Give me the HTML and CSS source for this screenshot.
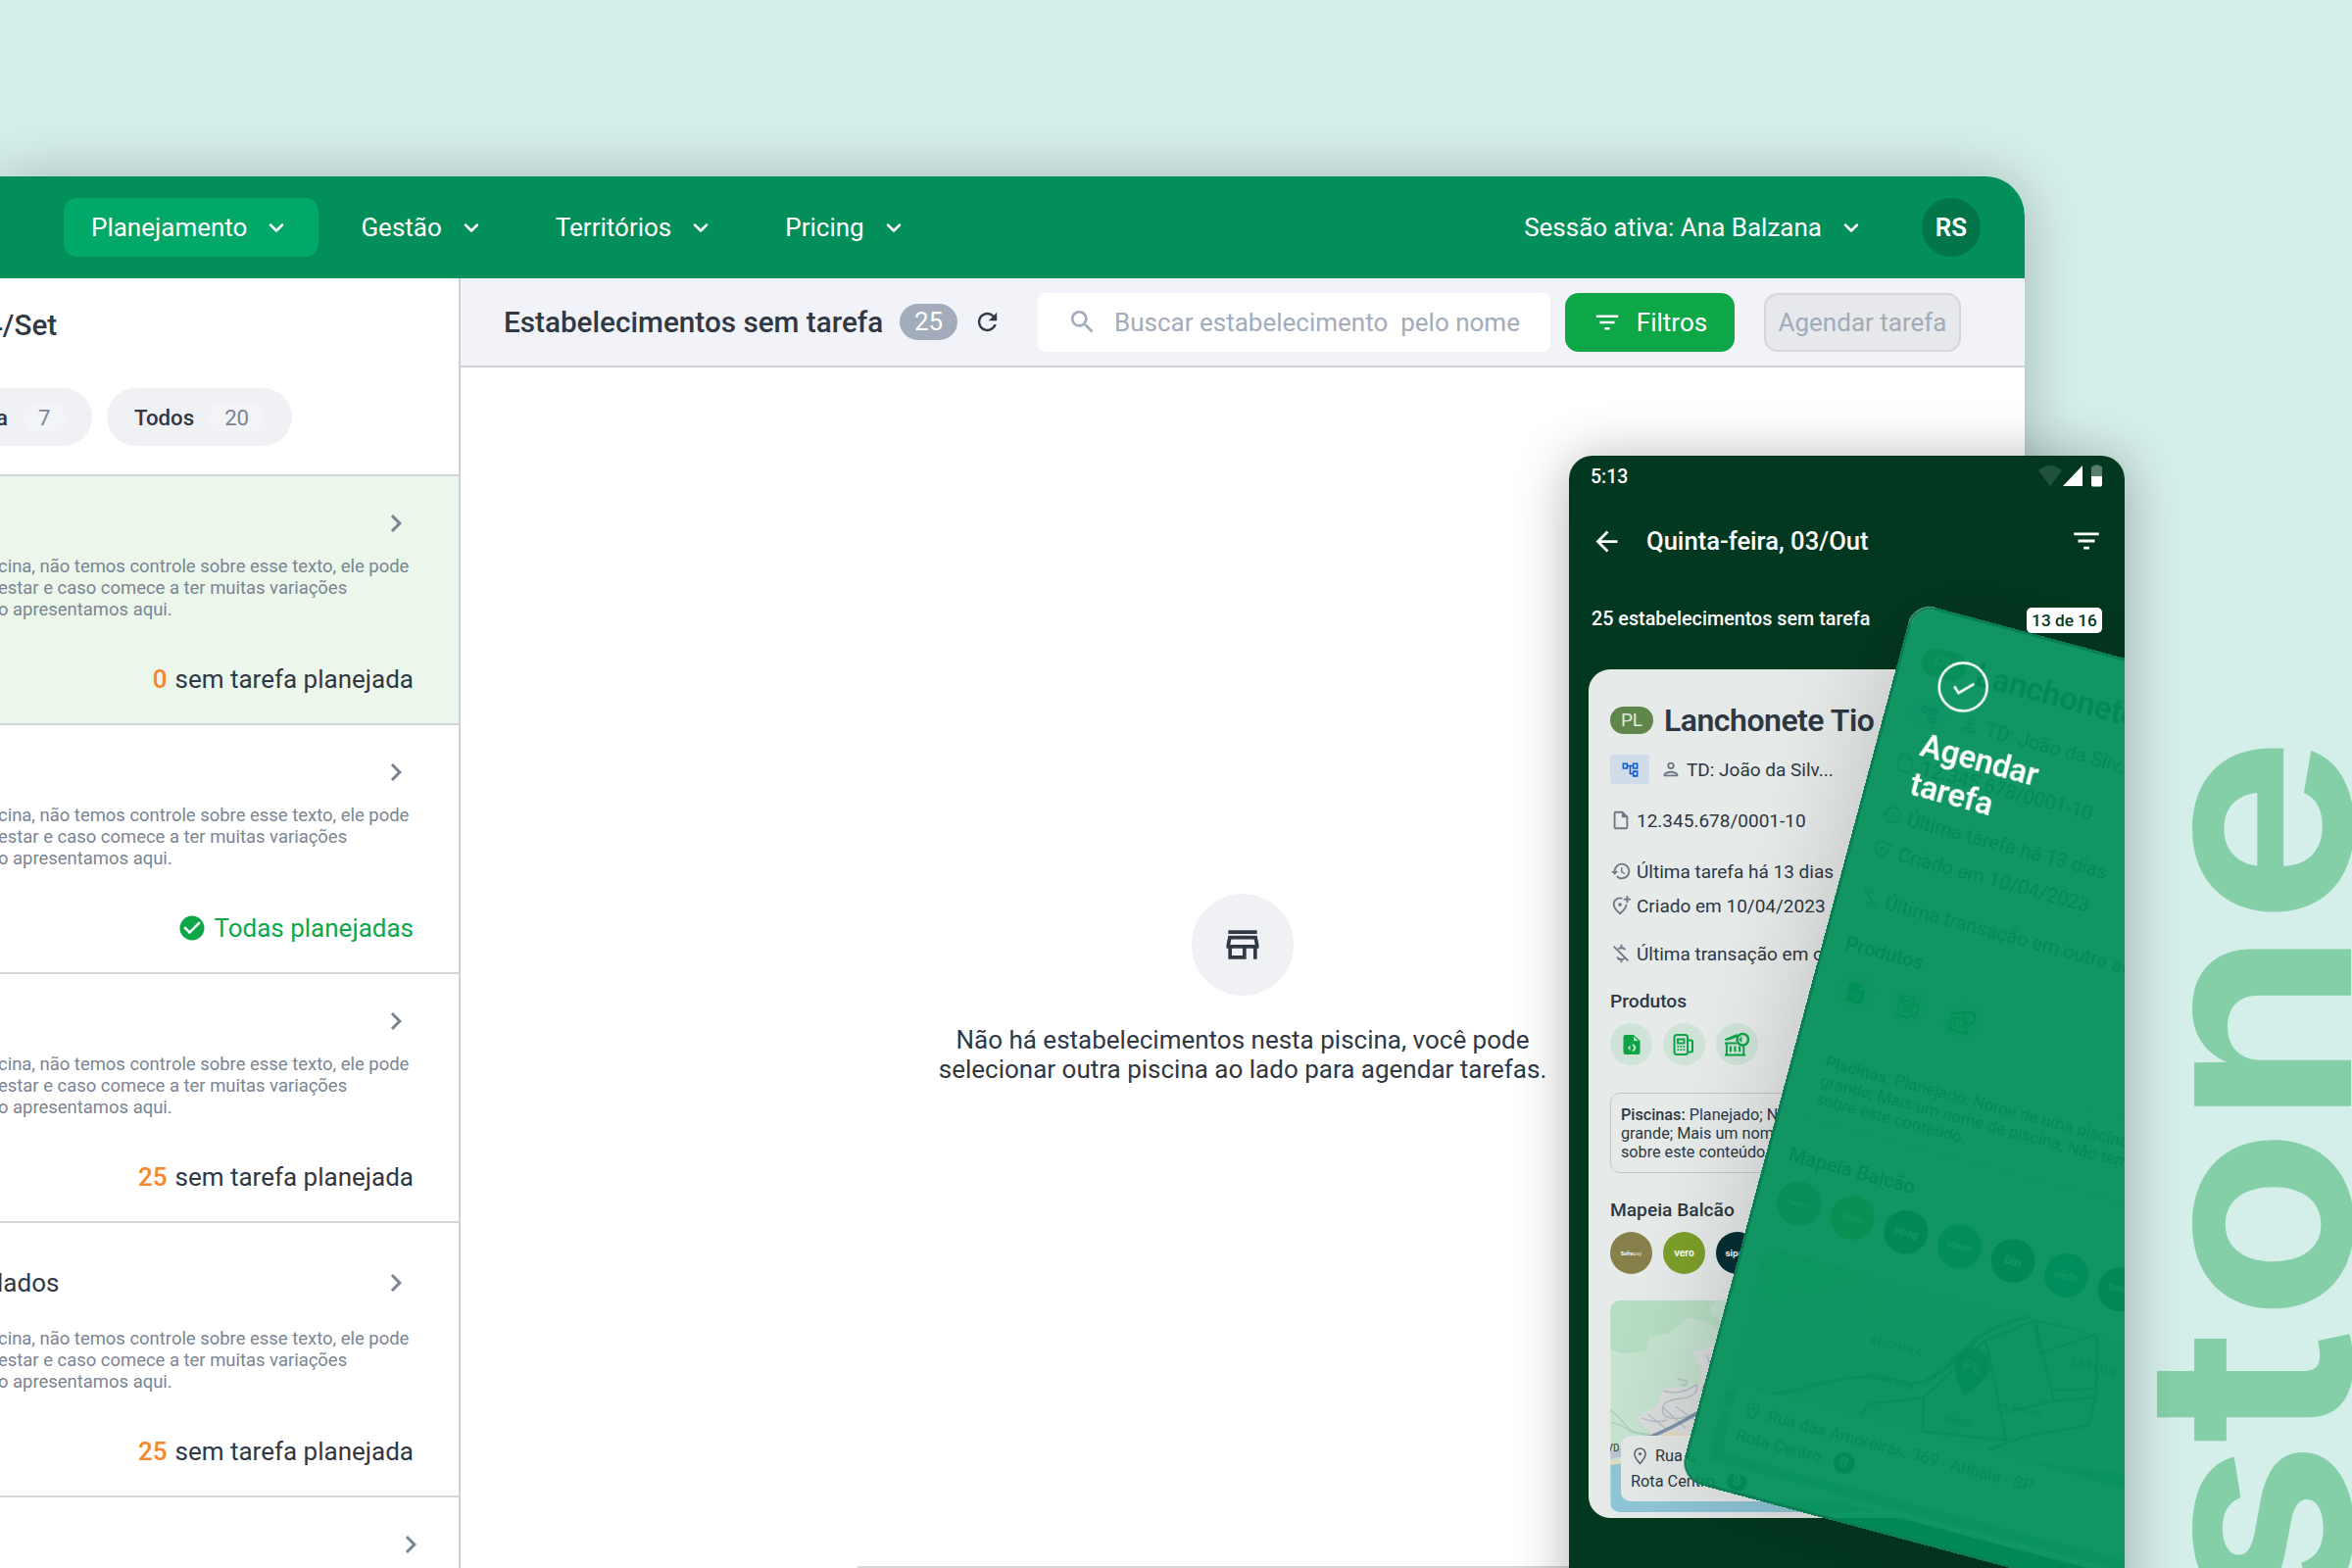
FILE: index.html
```html
<!DOCTYPE html>
<html lang="pt-BR">
<head>
<meta charset="utf-8">
<title>Planejamento</title>
<link rel="stylesheet" href="styles.css">
</head>
<body>
<svg class="defs" aria-hidden="true">
  <symbol id="i-down" viewBox="0 0 24 24"><path d="M7.200 10l4.800 4.800 4.800-4.800" fill="none" stroke="currentColor" stroke-width="2" stroke-linecap="round" stroke-linejoin="round"/></symbol>
  <symbol id="i-right" viewBox="0 0 24 24"><path fill="currentColor" d="M8.59 16.59 13.17 12 8.59 7.41 10 6l6 6-6 6z"/></symbol>
  <symbol id="i-refresh" viewBox="0 0 24 24"><path fill="currentColor" d="M17.65 6.35A7.96 7.96 0 0 0 12 4a8 8 0 1 0 7.73 10h-2.08A6 6 0 1 1 12 6c1.66 0 3.14.69 4.22 1.78L13 11h7V4z"/></symbol>
  <symbol id="i-search" viewBox="0 0 24 24"><path fill="currentColor" d="M15.5 14h-.79l-.28-.27A6.47 6.47 0 0 0 16 9.5 6.5 6.5 0 1 0 9.5 16c1.61 0 3.09-.59 4.23-1.57l.27.28v.79l5 4.99L20.49 19zm-6 0a4.5 4.5 0 1 1 0-9 4.5 4.5 0 0 1 0 9z"/></symbol>
  <symbol id="i-filter" viewBox="0 0 24 24"><path fill="currentColor" d="M10 18h4v-2h-4zM3 6v2h18V6zm3 7h12v-2H6z"/></symbol>
  <symbol id="i-check" viewBox="0 0 24 24"><path fill="currentColor" d="M12 2a10 10 0 1 0 0 20 10 10 0 0 0 0-20zm-2 15-5-5 1.41-1.41L10 14.17l7.59-7.59L19 8z"/></symbol>
  <symbol id="i-store" viewBox="0 0 24 24"><path fill="currentColor" d="M18.36 9l.6 3H5.04l.6-3zM20 4H4v2h16zm0 3H4l-1 5v2h1v6h10v-6h4v6h2v-6h1v-2zM6 18v-4h6v4z"/></symbol>
  <symbol id="i-back" viewBox="0 0 24 24"><path fill="currentColor" d="M20 11H7.83l5.59-5.59L12 4l-8 8 8 8 1.41-1.41L7.83 13H20z"/></symbol>
  <symbol id="i-tree" viewBox="0 0 24 24"><path fill="currentColor" d="M22 11V3h-7v3H9V3H2v8h7V8h2v10h4v3h7v-8h-7v3h-2V8h2v3zM7 9H4V5h3zm10 6h3v4h-3zm0-10h3v4h-3z"/></symbol>
  <symbol id="i-person" viewBox="0 0 24 24"><path fill="currentColor" d="M12 6a2 2 0 1 1 0 4 2 2 0 0 1 0-4m0 10c2.7 0 5.8 1.29 6 2H6c.23-.72 3.31-2 6-2m0-12a4 4 0 1 0 0 8 4 4 0 0 0 0-8zm0 10c-2.670 0-8 1.340-8 4v2h16v-2c0-2.660-5.330-4-8-4z"/></symbol>
  <symbol id="i-doc" viewBox="0 0 24 24"><path fill="currentColor" d="M14 2H6a2 2 0 0 0-2 2v16c0 1.100.890 2 1.990 2H18a2 2 0 0 0 2-2V8zM6 20V4h7v5h5v11z"/></symbol>
  <symbol id="i-history" viewBox="0 0 24 24"><path fill="currentColor" d="M13 3a9 9 0 0 0-9 9H1l3.890 3.890.070.140L9 12H6a7 7 0 1 1 2.060 4.940l-1.420 1.420A9 9 0 1 0 13 3zm-1 5v5l4.280 2.540.72-1.210-3.500-2.080V8z"/></symbol>
  <symbol id="i-addpin" viewBox="0 0 24 24"><path fill="none" stroke="currentColor" stroke-width="2" d="M13.500 4.200A7 7 0 0 0 4 10.700c0 3 2.500 6.600 7 10.300 4.500-3.700 7-7.300 7-10.300"/><circle cx="11" cy="11" r="2" fill="currentColor"/><path fill="currentColor" d="M18 1h2v3h3v2h-3v3h-2V6h-3V4h3z"/></symbol>
  <symbol id="i-nomoney" viewBox="0 0 24 24"><path fill="none" stroke="currentColor" stroke-width="2" d="M4 4l16 16M12.500 2v3.500M12.500 18.500V22M16.500 8c-.4-1.500-2-2.300-4-2.300-1.600 0-2.800.5-3.400 1.300M8 15.800c.3 1.800 2.200 2.700 4.400 2.700 1.700 0 3-.5 3.700-1.300"/></symbol>
  <symbol id="i-pin" viewBox="0 0 24 24"><path fill="none" stroke="currentColor" stroke-width="2" d="M12 2.500a7 7 0 0 0-7 7c0 5 7 12.500 7 12.500s7-7.500 7-12.500a7 7 0 0 0-7-7z"/><circle cx="12" cy="9.500" r="2" fill="currentColor"/></symbol>
  <symbol id="i-file" viewBox="0 0 24 24"><path fill="currentColor" d="M3.500 4a2 2 0 0 1 2-2H14l6.500 6v12a2 2 0 0 1-2 2h-13a2 2 0 0 1-2-2z"/><path class="hole" d="M14 3.600V8h4.600zM10.500 12.500v5.500L8 15.200zM12.700 11.200c2 .3 3.500 1.900 3.500 3.900s-1.500 3.700-3.500 4v-2c1-.2 1.500-1 1.500-2s-.5-1.700-1.500-2z"/></symbol>
  <symbol id="i-pos" viewBox="0 0 24 24"><path fill="none" stroke="currentColor" stroke-width="2" d="M4 2h8.500a2.500 2.500 0 0 1 2.500 2.500v15a2.500 2.500 0 0 1-2.500 2.500H4a2.500 2.500 0 0 1-2.500-2.500v-15A2.500 2.500 0 0 1 4 2zM5 6.500h6.500v4H5zM15 7.500h3.500a1.500 1.500 0 0 1 1.500 1.500v9a1.500 1.500 0 0 1-1.500 1.500H15"/><path fill="currentColor" d="M4.500 13h1.800v1.800H4.500zm3 0h1.800v1.800H7.500zm3 0h1.800v1.800h-1.800zm-6 3.200h1.800V18H4.500zm3 0h1.800V18H7.500zm3 0h1.800V18h-1.800z"/></symbol>
  <symbol id="i-bank" viewBox="0 0 28 26"><path fill="none" stroke="currentColor" stroke-width="2" d="M1 24.500h22M3 24V12M21 24V14M1 12h13M2 8.500L14 3.500"/><path fill="currentColor" d="M1 7.500L14 2v3.500L6 8.500H1zM6 15h2.200v6H6zm4.800 0H13v6h-2.200zm4.800 0h2.200v6h-2.200z"/><circle cx="20" cy="8" r="6" fill="none" stroke="currentColor" stroke-width="2.600"/><path fill="currentColor" d="M19 4.500v7L15.800 8z"/></symbol>
  <symbol id="map" viewBox="0 0 484 216">
    <rect width="484" height="216" fill="#c6e4d0"/>
    <path fill="#b7dec4" d="M0 0h108q-10 8-5 14l10 8h12V50l-14 6-8-30-12-6q-12-6-20 4l-8 10-23 2-4 16L12 54 0 50z"/>
    <path fill="#c6e4d0" d="M60 32l15-8 17-4 14 6 20 24-30 10-40 0z"/>
    <path fill="#dcdfde" d="M84 52l10-2 14-6 30-4 60 30 40-10 60-60h186v216H40v-82l-12-12q2-8 18-12l8-20 16-2q22 4 22-8v-10z"/>
    <path fill="#c6e4d0" d="M130 0h150l-50 30-40 50-40-10-14-24z"/>
    <g fill="none" stroke="#b9c0ca" stroke-width="1.500">
      <path d="M54 92q14 6 34-6 2 12-16 14t-18 8q-4 10 8 12t26-6M68 80l10 2q0 6-6 4M38 116l20 16M52 108l24 22M66 108l20 14M32 120q14 6 26 2M92 92l12-20M98 56l4 10 6-8"/>
    </g>
    <path fill="none" stroke="#a4cfb4" stroke-width="1.200" d="M0 112q10 8 16 16t24 8M0 124q14 4 20 10l20 4"/>
    <path fill="#e5dcbd" d="M0 164l30-6 30-26 18 6-30 28-48 6z"/>
    <path fill="#b9c3d2" d="M0 154l20-6 20-8v12L0 162z"/>
    <path fill="none" stroke="#8192ad" stroke-width="3.500" d="M22 145Q50 138 88 115T172 93Q196 84 211 52T269-1"/>
    <path fill="#8fc6d7" d="M0 168l60-10 80 8 110-24 234-30v104H0z"/>
    <g fill="#8fb8a0" fill-opacity=".35" stroke="#4b6a5c" stroke-width="1.800">
      <path d="M133 137l3-14 51-20 44-70 42-31 38 71-47 25 12 24-81 13-8-32M187 103l8 32M231 33l33 65M273 2l62-3 13 52-39 12M349 51l1 36-56 26-33 23M311 73l38-14M273 2l12 30 50-33"/>
    </g>
    <path fill="#2f6b4d" d="M225 92c-9-13-17-21-17-31a17 17 0 0 1 34 0c0 10-8 18-17 31z"/>
    <g class="map-text">
      <text x="-4" y="154">VD</text>
      <text x="122" y="65" letter-spacing="1.500">ROCINHA</text>
      <text x="318" y="34" letter-spacing="1.500">LEBLON</text>
      <text x="128" y="98" font-size="8">ROUPA SUJA</text>
      <text x="210" y="120" font-size="8">VIDIGAL</text>
      <text x="262" y="92" font-size="7">Av. Niemeyer</text>
      <text transform="translate(188 88) rotate(-54)" font-size="8">Túnel Zuzu Angel</text>
    </g>
    <text x="225" y="67" class="map-pin">PL</text>
  </symbol>
</svg>

<main class="stage">
  <svg class="wordmark" viewBox="0 0 240 900">
    <text transform="translate(239 900) rotate(-90) scale(1.100 1)" x="-46 115 229 410 597" y="0">stone</text>
  </svg>

  <section class="window">
    <header class="topbar">
      <nav class="nav">
        <a class="nav-item active">Planejamento<svg><use href="#i-down"/></svg></a>
        <a class="nav-item">Gestão<svg><use href="#i-down"/></svg></a>
        <a class="nav-item">Territórios<svg><use href="#i-down"/></svg></a>
        <a class="nav-item">Pricing<svg><use href="#i-down"/></svg></a>
      </nav>
      <div class="session">
        <a class="nav-item">Sessão ativa: Ana Balzana<svg><use href="#i-down"/></svg></a>
        <span class="avatar">RS</span>
      </div>
    </header>
    <div class="body">
      <aside class="side">
        <div class="side-head">
          <h2>4/Set</h2>
          <div class="chips">
            <span class="chip first">a<b>7</b></span>
            <span class="chip">Todos<b>20</b></span>
          </div>
        </div>
        <article class="pool selected">
          <div class="pool-top"><svg><use href="#i-right"/></svg></div>
          <p><span class="l1">cina, não temos controle sobre esse texto, ele pode</span><span class="l2">estar e caso comece a ter muitas variações</span><span class="l3">o apresentamos aqui.</span></p>
          <div class="pool-foot"><b>0</b>sem tarefa planejada</div>
        </article>
        <article class="pool">
          <div class="pool-top"><svg><use href="#i-right"/></svg></div>
          <p><span class="l1">cina, não temos controle sobre esse texto, ele pode</span><span class="l2">estar e caso comece a ter muitas variações</span><span class="l3">o apresentamos aqui.</span></p>
          <div class="pool-foot done"><svg><use href="#i-check"/></svg>Todas planejadas</div>
        </article>
        <article class="pool">
          <div class="pool-top"><svg><use href="#i-right"/></svg></div>
          <p><span class="l1">cina, não temos controle sobre esse texto, ele pode</span><span class="l2">estar e caso comece a ter muitas variações</span><span class="l3">o apresentamos aqui.</span></p>
          <div class="pool-foot"><b>25</b>sem tarefa planejada</div>
        </article>
        <article class="pool tall">
          <div class="pool-top"><h3>lados</h3><svg><use href="#i-right"/></svg></div>
          <p><span class="l1">cina, não temos controle sobre esse texto, ele pode</span><span class="l2">estar e caso comece a ter muitas variações</span><span class="l3">o apresentamos aqui.</span></p>
          <div class="pool-foot"><b>25</b>sem tarefa planejada</div>
        </article>
        <article class="pool last">
          <div class="pool-top"><svg><use href="#i-right"/></svg></div>
        </article>
      </aside>
      <section class="content">
        <div class="toolbar">
          <h1>Estabelecimentos sem tarefa</h1>
          <span class="count">25</span>
          <svg class="refresh"><use href="#i-refresh"/></svg>
          <div class="search"><svg><use href="#i-search"/></svg><span>Buscar estabelecimento &nbsp;pelo nome</span></div>
          <button class="btn primary"><svg><use href="#i-filter"/></svg>Filtros</button>
          <button class="btn disabled">Agendar tarefa</button>
        </div>
        <div class="empty">
          <span class="empty-icon"><svg><use href="#i-store"/></svg></span>
          <p>Não há estabelecimentos nesta piscina, você pode<br>selecionar outra piscina ao lado para agendar tarefas.</p>
        </div>
        <div class="footline"></div>
      </section>
    </div>
  </section>

  <section class="phone-shadow"></section>
  <section class="phone">
    <div class="status">
      <span>5:13</span>
      <svg viewBox="0 0 68 24"><path fill="#fff" fill-opacity=".12" d="M1 6Q13-4 25 6L13 22z"/><path fill="#fff" d="M26 22L46 1v21z"/><path fill="#fff" fill-opacity=".35" d="M55 3q0-1.500 1.500-1.500H58V.5h5v1h1.500q1.500 0 1.500 1.500v9H55z"/><path fill="#fff" d="M55 12h11v8.500q0 2-1.500 2h-8q-1.500 0-1.500-2z"/></svg>
    </div>
    <div class="phone-bar"><svg class="back"><use href="#i-back"/></svg><h2>Quinta-feira, 03/Out</h2><svg class="filter"><use href="#i-filter"/></svg></div>
    <div class="phone-info"><span>25 estabelecimentos sem tarefa</span><span class="badge">13 de 16</span></div>

    <article class="card">
      <div class="row title"><span class="pl">PL</span><h3>Lanchonete Tio</h3></div>
      <div class="row tags"><span class="tree"><svg><use href="#i-tree"/></svg></span><svg class="person"><use href="#i-person"/></svg><span>TD: João da Silv...</span></div>
      <div class="row cnpj"><svg><use href="#i-doc"/></svg><span>12.345.678/0001-10</span></div>
      <div class="row task"><svg><use href="#i-history"/></svg><span>Última tarefa há 13 dias</span></div>
      <div class="row created"><svg><use href="#i-addpin"/></svg><span>Criado em 10/04/2023</span></div>
      <div class="row trans"><svg><use href="#i-nomoney"/></svg><span>Última transação em outra adq.</span></div>
      <h4>Produtos</h4>
      <div class="circles prods"><span><svg><use href="#i-file"/></svg></span><span><svg><use href="#i-pos"/></svg></span><span><svg class="bank"><use href="#i-bank"/></svg></span></div>
      <p class="pools"><b>Piscinas:</b> Planejado; Nome de uma piscina<br>grande; Mais um nome de piscina; Não temos<br>sobre este conteúdo.</p>
      <h4 class="second">Mapeia Balcão</h4>
      <div class="circles brands"><span class="safra">Safra<i>pay</i></span><span class="vero">vero</span><span class="sipag">sipag</span><span class="stone">stone</span><span class="bin">bin</span><span class="cielo">cielo</span><span class="outros">Outros</span></div>
      <div class="map"><svg><use href="#map"/></svg>
        <div class="address"><div><svg><use href="#i-pin"/></svg>Rua das Amoreiras, 369 - Atibaia - SP</div><div class="route">Rota Centro<b>8</b></div></div>
      </div>
    </article>

    <div class="swipe">
      <div class="ghost">
        <article class="card">
          <div class="row title"><span class="pl">PL</span><h3>Lanchonete Tio</h3></div>
          <div class="row tags"><span class="tree"><svg><use href="#i-tree"/></svg></span><svg class="person"><use href="#i-person"/></svg><span>TD: João da Silv...</span></div>
          <div class="row cnpj"><svg><use href="#i-doc"/></svg><span>12.345.678/0001-10</span></div>
          <div class="row task"><svg><use href="#i-history"/></svg><span>Última tarefa há 13 dias</span></div>
          <div class="row created"><svg><use href="#i-addpin"/></svg><span>Criado em 10/04/2023</span></div>
          <div class="row trans"><svg><use href="#i-nomoney"/></svg><span>Última transação em outra adq.</span></div>
          <h4>Produtos</h4>
          <div class="circles prods"><span><svg><use href="#i-file"/></svg></span><span><svg><use href="#i-pos"/></svg></span><span><svg class="bank"><use href="#i-bank"/></svg></span></div>
          <p class="pools"><b>Piscinas:</b> Planejado; Nome de uma piscina<br>grande; Mais um nome de piscina; Não temos<br>sobre este conteúdo.</p>
          <h4 class="second">Mapeia Balcão</h4>
          <div class="circles brands"><span class="safra">Safra<i>pay</i></span><span class="vero">vero</span><span class="sipag">sipag</span><span class="stone">stone</span><span class="bin">bin</span><span class="cielo">cielo</span><span class="outros">Outros</span></div>
          <div class="map"><svg><use href="#map"/></svg>
            <div class="address"><div><svg><use href="#i-pin"/></svg>Rua das Amoreiras, 369 - Atibaia - SP</div><div class="route">Rota Centro<b>8</b></div></div>
          </div>
        </article>
      </div>
      <div class="veil">
        <svg class="tick" viewBox="0 0 52 52"><circle cx="26" cy="26" r="24.500" fill="none" stroke="#fff" stroke-width="2.600"/><path d="M17 27l5.500 6 14-12" fill="none" stroke="#fff" stroke-width="2.600"/></svg>
        <strong>Agendar<br>tarefa</strong>
      </div>
    </div>
  </section>
</main>
</body>
</html>
```
FILE: styles.css
```css
* { box-sizing: border-box; }
body { margin: 0; font-family: Roboto, "Liberation Sans", sans-serif; color: #2f3843; }
h1, h2, h3, h4, p { margin: 0; font-weight: 500; }
svg { display: block; flex: none; }
.defs { position: absolute; width: 0; height: 0; }
.stage { position: relative; width: 2400px; height: 1600px; overflow: hidden; background: #d4eee9; }

.wordmark { position: absolute; left: 2160px; top: 700px; width: 240px; height: 900px; }
.wordmark text { font: 700 293px Inter, sans-serif; fill: #84cfa8; }

/* desktop window */
.window { position: absolute; left: 0; top: 180px; width: 2066px; height: 1500px; border-radius: 0 40px 0 0; background: #fff; box-shadow: 0 4px 60px rgba(0, 0, 0, .24); overflow: hidden; }
.topbar { display: flex; justify-content: space-between; align-items: center; height: 104px; padding: 0 45px 0 65px; background: #028f5a; color: #fff; }
.nav, .session { display: flex; align-items: center; }
.nav { gap: 15px; }
.nav-item { display: flex; align-items: center; gap: 15px; height: 60px; padding: 0 28px; border-radius: 14px; font-size: 26px; white-space: nowrap; }
.nav-item svg { width: 30px; height: 30px; }
.nav-item.active { background: #02a868; }
.session { gap: 29px; }
.avatar { display: flex; align-items: center; justify-content: center; width: 60px; height: 60px; border-radius: 50%; background: #027549; font-size: 26px; font-weight: 600; }
.body { display: flex; height: 1396px; }

.side { width: 470px; border-right: 2px solid #cccfd1; overflow: hidden; flex: none; }
.side-head { height: 202px; padding-top: 30px; border-bottom: 2px solid #d3d5d7; }
.side-head h2 { height: 36px; line-height: 36px; font-size: 29.700px; margin-left: -14px; white-space: nowrap; }
.chips { display: flex; gap: 15px; margin-top: 46px; }
.chip { display: flex; align-items: center; height: 59px; padding: 0 28px; border-radius: 30px; background: #f0f1f4; font-size: 22.200px; font-weight: 500; gap: 15px; }
.chip.first { margin-left: -40px; padding-left: 36px; width: 134px; }
.chip b { padding: 0 16px; height: 30px; line-height: 30px; border-radius: 15px; background: #f2f4f8; color: #7b8593; font-weight: 400; }
.pool { height: 254px; padding-right: 46px; border-bottom: 2px solid #d3d5d7; }
.pool.selected { background: #eaf7ea; }
.pool.tall { height: 280px; }
.pool-top { display: flex; justify-content: flex-end; align-items: center; height: 96px; }
.pool.tall .pool-top { height: 122px; justify-content: space-between; }
.pool.tall .pool-top h3 { font-size: 26px; font-weight: 400; margin-left: -3px; }
.pool-top svg { width: 36px; height: 36px; color: #7b8491; }
.pool.last .pool-top svg { margin-right: -15px; }
.pool p { margin-top: -15px; color: #7b8593; font-size: 18.450px; font-weight: 400; line-height: 22px; }
.pool.tall p { margin-top: -15px; }
.pool p span { display: block; white-space: nowrap; margin-left: -2px; }
.pool-foot { display: flex; align-items: center; justify-content: flex-end; height: 40px; margin-top: 40px; font-size: 26px; }
.pool-foot b { color: #f5862b; font-weight: 500; margin-right: 8px; }
.pool-foot.done { color: #0ea748; }
.pool-foot svg { width: 30px; height: 30px; margin-right: 7px; }

.content { flex: 1; display: flex; flex-direction: column; }
.toolbar { display: flex; align-items: center; height: 91px; padding: 0 65px 0 44px; background: #f2f3f8; border-bottom: 2px solid #cdcfd2; }
.toolbar h1 { font-size: 29.700px; width: 388px; white-space: nowrap; }
.count { width: 59px; margin-left: 16px; height: 37px; line-height: 37px; text-align: center; border-radius: 19px; background: #a2acba; color: #fff; font-size: 26px; }
.refresh { width: 29px; height: 29px; margin-left: 16px; }
.search { display: flex; align-items: center; width: 523px; height: 60px; margin-left: 37px; padding-left: 30px; gap: 17px; border-radius: 8px; background: #fff; color: #a2acba; font-size: 26px; white-space: nowrap; }
.search svg { width: 31px; height: 31px; }
.btn { display: flex; align-items: center; justify-content: center; height: 60px; border-radius: 14px; border: 0; padding: 0; font: 400 26px Roboto, sans-serif; white-space: nowrap; }
.btn.primary { width: 173px; margin-left: 15px; gap: 15px; background: #0da748; color: #fff; }
.btn.primary svg { width: 30px; height: 30px; }
.btn.disabled { width: 201px; margin-left: 30px; background: #e6e8ec; border: 2px solid #d5d7da; color: #a2abb8; }
.empty { display: flex; flex-direction: column; align-items: center; padding-top: 537px; height: 1223px; }
.empty-icon { display: flex; align-items: center; justify-content: center; width: 104px; height: 104px; border-radius: 50%; background: #f0f1f4; }
.empty-icon svg { width: 44px; height: 44px; }
.empty p { margin-top: 30px; font-size: 26px; line-height: 30px; font-weight: 400; text-align: center; white-space: nowrap; }
.footline { margin: 0 0 0 405px; border-top: 2px solid #d6d6d6; }

/* phone */
.phone, .phone-shadow { position: absolute; left: 1601px; top: 465px; width: 567px; height: 1200px; border-radius: 24px; }
.phone-shadow { box-shadow: 0 4px 56px rgba(0, 0, 0, .3); }
.phone { background: #033820; overflow: hidden; color: #fff; }
.status { display: flex; justify-content: space-between; align-items: center; height: 42px; padding: 0 21px 0 22px; font-size: 19.500px; font-weight: 500; }
.status svg { width: 68px; height: 24px; }
.phone-bar { display: flex; align-items: center; height: 60px; margin-top: 15px; padding: 0 22px; }
.phone-bar .back { width: 33px; height: 33px; }
.phone-bar h2 { flex: 1; margin-left: 24px; font-size: 25.600px; }
.phone-bar .filter { width: 34px; height: 34px; }
.phone-info { display: flex; justify-content: space-between; align-items: center; height: 30px; margin-top: 34px; padding: 0 23px; font-size: 19.750px; font-weight: 500; }
.badge { position: relative; z-index: 1; height: 26px; line-height: 26px; width: 77px; margin-top: 3px; text-align: center; border-radius: 5px; background: #fff; color: #033820; font-size: 17.300px; white-space: nowrap; }

.card { width: 527px; height: 866px; margin: 37px 0 0 20px; padding: 32px 20px 0 22px; border-radius: 22px; background: linear-gradient(100deg, #e6eae9 0 30%, #e3e6e5); color: #2d3843; overflow: hidden; }
.row { display: flex; align-items: center; height: 30px; font-size: 19px; white-space: nowrap; }
.row > svg { width: 22px; height: 22px; margin: 0 5px 0 0; color: #6d7884; }
.row.title { height: 40px; gap: 11px; }
.pl { width: 44px; height: 28px; line-height: 28px; border-radius: 14px; text-align: center; background: #5f874c; color: #e1e9de; font-size: 19px; }
.row.title h3 { font-size: 32px; letter-spacing: -.5px; font-weight: 600; }
.row.tags { margin-top: 15px; }
.tree { display: flex; align-items: center; justify-content: center; width: 40px; height: 30px; border-radius: 3px; background: #d0dde8; color: #1059d2; }
.tree svg { width: 19px; height: 19px; }
.row > svg.person { margin: 0 5px 0 11px; }
.row.cnpj { margin-top: 22px; }
.row.task { margin-top: 22px; }
.row.created { margin-top: 5px; }
.row.trans { margin-top: 19px; }
.card h4 { margin-top: 22px; height: 24px; line-height: 24px; font-size: 19.200px; }
.card h4.second { margin-top: 26px; }
.circles { display: flex; gap: 11px; margin-top: 10px; }
.circles span { display: flex; align-items: center; justify-content: center; flex: none; width: 43px; height: 43px; border-radius: 50%; color: #fff; }
.prods span { background: #cfe3d8; color: #0da446; }
.prods svg { width: 24px; height: 24px; }
.prods svg.bank { width: 27px; height: 25px; }
.hole { fill: #cfe3d8; }
.pools { margin-top: 28px; height: 82px; padding: 12px 10px; border: 1.500px solid #c3c8c8; border-radius: 10px; font-size: 16.200px; line-height: 19px; font-weight: 400; white-space: nowrap; }
.pools b { font-weight: 500; }
.brands { font: 700 9px Inter, sans-serif; }
.brands i { font-weight: 300; font-style: normal; }
.safra { background: #87804a; font-size: 5px; }
.vero { background: #7d9f2a; font-size: 9.500px; }
.sipag { background: #052f33; }
.stone { background: #1f7a52; }
.bin { background: #053a44; font-size: 11px; }
.cielo { background: #0a7f94; font-size: 10px; }
.outros { background: #27323a; font-size: 7px; }
.map { position: relative; margin-top: 27px; height: 216px; border-radius: 10px; overflow: hidden; }
.map > svg { width: 485px; height: 216px; }
.map-text { font: 500 10px Roboto, sans-serif; fill: #4b5560; }
.map-pin { font: 700 15px Roboto, sans-serif; fill: #a9c6b4; text-anchor: middle; }
.address { position: absolute; left: 11px; right: 11px; top: 138px; height: 67px; padding: 7px 10px; border-radius: 10px; background: #e5e9e8; font-size: 16.300px; white-space: nowrap; }
.address div { display: flex; align-items: center; height: 26px; gap: 6px; }
.address svg { width: 19px; height: 19px; color: #5c6773; }
.address .route { gap: 12px; }
.route b { width: 21px; height: 21px; line-height: 21px; border-radius: 50%; text-align: center; background: #2b3b3a; color: #e6eae8; font-weight: 500; font-size: 15px; }

/* card being swiped towards the schedule action */
.swipe { position: absolute; left: 351.600px; top: 148.600px; width: 580px; height: 927px; transform: rotate(15deg); transform-origin: 0 0; border-radius: 24px; box-shadow: 0 0 110px rgba(0, 0, 0, .18); }
.ghost .card { margin: 0; position: absolute; left: 0; top: 0; transform: scale(1.047); transform-origin: 0 0; }
.veil { position: absolute; inset: 0; padding: 46px; border-radius: 24px; border: 3px solid #0a7f55; background: rgba(0, 143, 88, .93); background-clip: padding-box; }
.tick { width: 52px; height: 52px; margin: -4px 0 0 -4px; transform: rotate(-5deg); }
.veil strong { display: block; margin: 22px 0 0 -4px; font-size: 32.500px; line-height: 41px; font-weight: 600; }
```
